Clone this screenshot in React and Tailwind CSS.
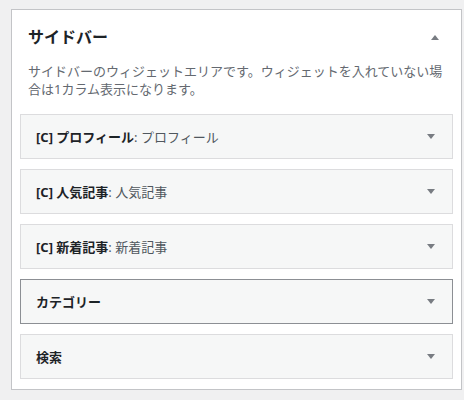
import React from "react";

const font = { fontFamily: '"Noto Sans", "Noto Sans CJK JP", sans-serif' };

function Tri({ up }) {
  return (
    <svg width="8" height="5" viewBox="0 0 8 5" className="block">
      {up ? (
        <polygon points="0,5 8,5 4,0" fill="#787c82" />
      ) : (
        <polygon points="0,0 8,0 4,5" fill="#787c82" />
      )}
    </svg>
  );
}

function Widget({ title, sub, hover }) {
  return (
    <div
      className={`flex h-[45px] items-center justify-between border bg-[#f6f7f7] pl-[15px] pr-[17px] ${
        hover ? "border-[#8c8f94]" : "border-[#dcdcde]"
      }`}
    >
      <div className="text-[13px] leading-[18px] text-[#1d2327]">
        <span className="font-bold">{title}</span>
        {sub && <span className="text-[#50575e]">: {sub}</span>}
      </div>
      <Tri />
    </div>
  );
}

export default function App() {
  return (
    <div className="min-h-[400px] w-[464px] bg-[#f0f0f1] pl-[11px] pt-[9px]" style={font}>
      <div className="w-[451px] border border-[#c3c4c7] bg-white pb-[10px]">
        <div className="flex items-center justify-between pl-[16px] pr-[22px] pt-[15px]">
          <h2 className="text-[16px] font-bold leading-[24px] text-[#1d2327]">サイドバー</h2>
          <Tri up />
        </div>
        <p className="mt-[13px] pl-[16px] pr-[12px] text-[13px] leading-[18px] text-[#646970]">
          サイドバーのウィジェットエリアです。ウィジェットを入れていない場合は1カラム表示になります。
        </p>
        <div className="mt-[16px] flex flex-col gap-[10px] px-[8px]">
          <Widget title="[C] プロフィール" sub="プロフィール" />
          <Widget title="[C] 人気記事" sub="人気記事" />
          <Widget title="[C] 新着記事" sub="新着記事" />
          <Widget title="カテゴリー" hover />
          <Widget title="検索" />
        </div>
      </div>
    </div>
  );
}
